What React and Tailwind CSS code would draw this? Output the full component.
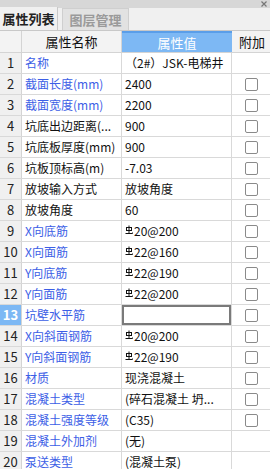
import React from 'react';

const rows = [
  { name: '名称', value: '（2#）JSK-电梯井', blue: true, check: false },
  { name: '截面长度(mm)', value: '2400', blue: true, check: true },
  { name: '截面宽度(mm)', value: '2200', blue: true, check: true },
  { name: '坑底出边距离(...', value: '900', blue: false, check: true },
  { name: '坑底板厚度(mm)', value: '900', blue: false, check: true },
  { name: '坑板顶标高(m)', value: '-7.03', blue: false, check: true },
  { name: '放坡输入方式', value: '放坡角度', blue: false, check: true },
  { name: '放坡角度', value: '60', blue: false, check: true },
  { name: 'X向底筋', value: '20@200', rebar: true, blue: true, check: true },
  { name: 'X向面筋', value: '22@160', rebar: true, blue: true, check: true },
  { name: 'Y向底筋', value: '22@190', rebar: true, blue: true, check: true },
  { name: 'Y向面筋', value: '22@200', rebar: true, blue: true, check: true },
  { name: '坑壁水平筋', value: '', blue: true, check: true, selected: true },
  { name: 'X向斜面钢筋', value: '20@200', rebar: true, blue: true, check: true },
  { name: 'Y向斜面钢筋', value: '22@190', rebar: true, blue: true, check: true },
  { name: '材质', value: '现浇混凝土', blue: true, check: true },
  { name: '混凝土类型', value: '(碎石混凝土 坍...', blue: true, check: true },
  { name: '混凝土强度等级', value: '(C35)', blue: true, check: true },
  { name: '混凝土外加剂', value: '(无)', blue: true, check: false },
  { name: '泵送类型', value: '(混凝土泵)', blue: true, check: false },
];

function Rebar() {
  return (
    <svg width="8" height="10" viewBox="0 0 8 10" className="inline-block mr-[1px] -translate-y-[3px]" fill="none" stroke="#111" strokeWidth="1">
      <path d="M4 0.5V8.5" />
      <rect x="1.5" y="2.5" width="5" height="3" />
      <path d="M0.5 8.5H7.5V7.5" />
    </svg>
  );
}

function Checkbox() {
  return <span className="block w-[13px] h-[13px] rounded-[2px] border border-[#8a8a8a] bg-white" />;
}

export default function App() {
  return (
    <div className="w-[270px] h-[469px] overflow-hidden bg-[#f0f0f0] text-[12px] text-[#111]" style={{ fontFamily: '"Noto Sans CJK SC", "Noto Sans", sans-serif' }}>
      <div className="h-[8px] bg-[#d7d7d7] flex justify-end items-center pr-[3px]">
        <svg width="6" height="6" viewBox="0 0 6 6" stroke="#777" strokeWidth="1.2">
          <path d="M0.5 0.5L5.5 5.5M5.5 0.5L0.5 5.5" />
        </svg>
      </div>
      <div className="h-[23px] flex items-end border-b border-[#c8c8c8] bg-[#f0f0f0]">
        <div className="h-[23px] w-[58px] flex items-center justify-center text-[13px] font-bold text-[#222] bg-[#f0f0f0] border-r border-[#c8c8c8]">属性列表</div>
        <div className="h-[22px] w-[67px] ml-[4px] flex items-center justify-center text-[13px] font-bold text-[#9a9a9a] bg-[#e2e2e2] border border-b-0 border-[#cfcfcf]">图层管理</div>
      </div>
      <div className="flex h-[22px] bg-[#f3f3f3] border-b border-[#d4d4d4]">
        <div className="w-[22px] border-r border-[#d4d4d4]" />
        <div className="w-[100px] border-r border-[#d4d4d4] flex items-center justify-center text-[13px]">属性名称</div>
        <div className="w-[110px] flex items-center justify-center text-[13px] text-white bg-[#7db8f4] border-t-2 border-[#5a9ee9]">属性值</div>
        <div className="w-[38px] flex items-center pl-[7px] text-[13px] whitespace-nowrap">附加</div>
      </div>
      {rows.map((r, i) => (
        <div key={i} className="flex h-[21px] border-b border-[#d9d9d9] bg-white">
          <div className={`w-[22px] shrink-0 border-r border-[#d4d4d4] flex items-center justify-center text-[13px] ${r.selected ? 'bg-[#7db8f4] text-white font-bold' : 'bg-[#f0f0f0] text-[#222]'}`}>{i + 1}</div>
          <div className={`w-[100px] shrink-0 border-r border-[#d9d9d9] flex items-center pl-[3px] whitespace-nowrap ${r.blue ? 'text-[#3c5ee6]' : 'text-[#111]'}`}>
            {r.name}
          </div>
          <div className="w-[110px] shrink-0 border-r border-[#d9d9d9] flex items-center whitespace-nowrap">
            {r.selected ? (
              <div className="w-full h-full border-2 border-[#7a7a7a]" />
            ) : (
              <span className="pl-[3px]">
                {r.rebar && <Rebar />}
                {r.value}
              </span>
            )}
          </div>
          <div className="w-[38px] shrink-0 flex items-center justify-center pl-[1px]">
            {r.check && <Checkbox />}
          </div>
        </div>
      ))}
    </div>
  );
}
